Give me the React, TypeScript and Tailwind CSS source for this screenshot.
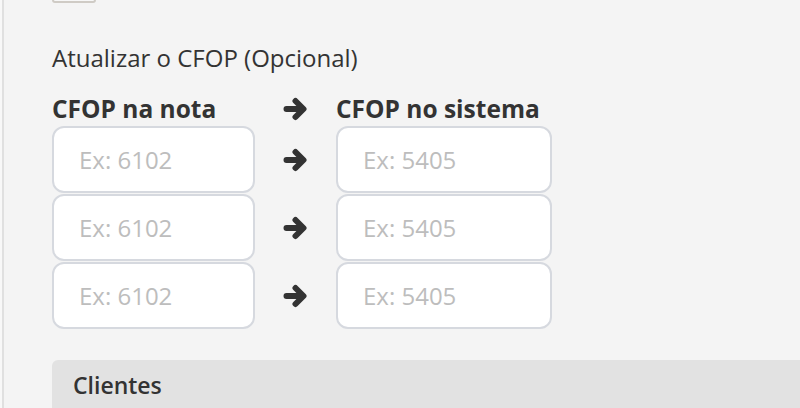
const linhas = [0, 1, 2];

function Seta() {
  return (
    <div className="flex w-[81px] items-center justify-center">
      <svg width="24" height="24" viewBox="0 0 24 24" className="ml-[-1px]">
        <path
          d="M3.5 12 H19.5 M12.5 4 L20.5 12 L12.5 20"
          fill="none"
          stroke="#333"
          strokeWidth="6"
          strokeLinecap="round"
          strokeLinejoin="round"
        />
      </svg>
    </div>
  );
}

export default function App() {
  return (
    <div
      className="flex h-[408px] w-[800px] overflow-hidden bg-[#f4f4f4] text-[#333]"
      style={{ fontFamily: "'Open Sans', 'Noto Sans', sans-serif" }}
    >
      <div className="w-[2px] bg-[#f8f8f8]" />
      <div className="w-[2px] bg-[#e0e0e0]" />
      <div className="flex flex-1 flex-col pl-[48px]">
        {/* checkbox cortado no topo */}
        <div className="-mt-[38px] h-[41px] w-[44px] shrink-0 rounded-[3px] border-2 border-[#cfcbc5] bg-[#f7f7f7]" />

        <h3 className="mt-[40px] shrink-0 text-[24px] leading-[30px]">Atualizar o CFOP (Opcional)</h3>

        <div className="mt-[22px] flex h-[28px] shrink-0 items-center text-[24.5px] font-bold">
          <div className="w-[203px]">CFOP na nota</div>
          <Seta />
          <div>CFOP no sistema</div>
        </div>

        <div className="mt-[3px] flex shrink-0 flex-col gap-[1px]">
          {linhas.map((i) => (
            <div key={i} className="flex">
              <input
                placeholder="Ex: 6102"
                className="h-[67px] w-[203px] rounded-[12px] border-2 border-[#d6d9df] bg-white px-[25px] text-[24px] text-[#333] outline-none placeholder:text-[#bdbdbd]"
              />
              <Seta />
              <input
                placeholder="Ex: 5405"
                className="h-[67px] w-[216px] rounded-[12px] border-2 border-[#d6d9df] bg-white px-[25px] text-[24px] text-[#333] outline-none placeholder:text-[#bdbdbd]"
              />
            </div>
          ))}
        </div>

        <div className="mt-[31px] flex h-[60px] shrink-0 items-start rounded-tl-[6px] bg-[#e2e2e2] px-[21px] pt-[10px]">
          <span className="text-[23px] font-semibold leading-[30px]">Clientes</span>
        </div>
      </div>
    </div>
  );
}
